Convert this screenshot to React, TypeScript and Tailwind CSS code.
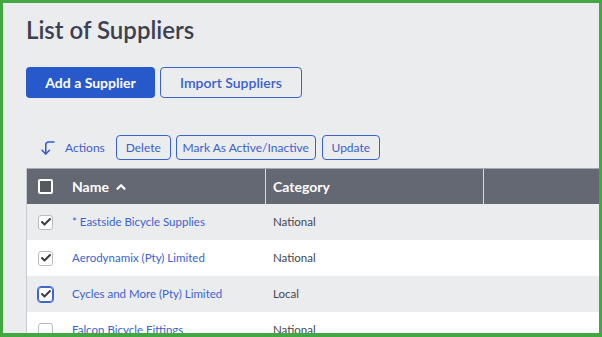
import { CornerLeftDown, ChevronUp, Check } from "lucide-react";

const rows = [
	{ name: "* Eastside Bicycle Supplies", category: "National", checked: true },
	{ name: "Aerodynamix (Pty) Limited", category: "National", checked: true },
	{ name: "Cycles and More (Pty) Limited", category: "Local", checked: true, focus: true },
	{ name: "Falcon Bicycle Fittings", category: "National", checked: false },
];

function RowCheckbox({ checked, focus }: { checked: boolean; focus?: boolean }) {
	return (
		<div
			className={`w-[15px] h-[15px] rounded-[3px] bg-white flex items-center justify-center ${
				focus ? "border border-[#3f66cf] outline outline-1 outline-[#3f66cf]" : "border border-[#b9bbc0]"
			}`}
		>
			{checked && <Check size={12} strokeWidth={4} className="text-[#3a3d44]" />}
		</div>
	);
}

export default function App() {
	return (
		<div
			className="w-[602px] h-[337px] overflow-hidden bg-[#ebecee] border-[3px] border-b-4 border-[#43a843] text-[#3b3f4c]"
			style={{ fontFamily: "Lato, 'Open Sans', sans-serif" }}
		>
			<div className="pl-[23px] pt-[12px]">
				<h1 className="text-[24px] leading-[30px] font-semibold text-[#3c4050]">List of Suppliers</h1>

				<div className="flex gap-[5px] mt-[22px]">
					<button className="w-[129px] h-[31px] rounded-[4px] bg-[#2759cb] text-white text-[14px] font-bold">
						Add a Supplier
					</button>
					<button className="w-[142px] h-[31px] rounded-[4px] border border-[#3a62cb] text-[#3b5fc9] text-[14px] font-semibold">
						Import Suppliers
					</button>
				</div>

				<div className="flex items-center mt-[37px] h-[25px]">
					<CornerLeftDown size={18} strokeWidth={2} className="ml-[13px] text-[#2f5bcb]" />
					<span className="ml-[8px] text-[12px] text-[#3b5fc9]">Actions</span>
					<div className="flex gap-[5px] ml-[11px]">
						<button className="w-[55px] h-[25px] rounded-[4px] border border-[#3a62cb] text-[12px] text-[#3b5fc9]">
							Delete
						</button>
						<button className="w-[140px] h-[25px] rounded-[4px] border border-[#3a62cb] text-[12px] text-[#3b5fc9]">
							Mark As Active/Inactive
						</button>
						<button className="w-[58px] h-[25px] rounded-[4px] border border-[#3a62cb] text-[12px] text-[#3b5fc9] ml-[1px]">
							Update
						</button>
					</div>
				</div>

				<div className="mt-[8px] border-l border-[#c9cbcf]">
					<div className="flex h-[36px] bg-[#646873] border-t border-[#a5a8ae] text-white text-[14px] font-bold">
						<div className="w-[45px] flex items-center pl-[11px]">
							<div className="w-[15px] h-[15px] rounded-[2px] border-2 border-white bg-[#55585f]" />
						</div>
						<div className="w-[193px] flex items-center gap-[5px]">
							Name
							<ChevronUp size={14} strokeWidth={4} />
						</div>
						<div className="w-[218px] flex items-center pl-[7px] border-l border-[#d9dadd]">Category</div>
						<div className="flex-1 border-l border-[#d9dadd]" />
					</div>
					{rows.map((r, i) => (
						<div
							key={i}
							className={`flex h-[36px] items-center text-[11.5px] ${i % 2 === 0 ? "bg-[#ebecee]" : "bg-white"}`}
						>
							<div className="w-[45px] pl-[11px]">
								<RowCheckbox checked={r.checked} focus={r.focus} />
							</div>
							<div className="w-[193px] text-[#3b63cc]">{r.name}</div>
							<div className="w-[218px] pl-[8px] text-[#44474f]">{r.category}</div>
						</div>
					))}
				</div>
			</div>
		</div>
	);
}
